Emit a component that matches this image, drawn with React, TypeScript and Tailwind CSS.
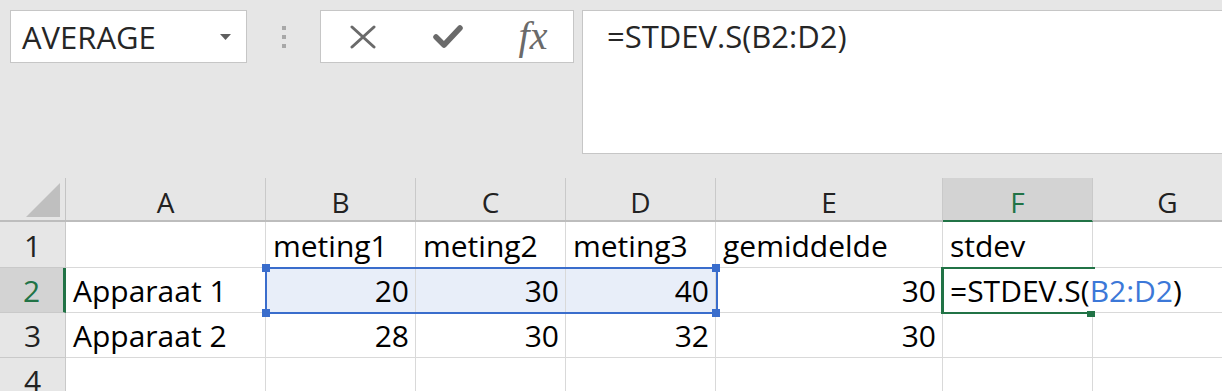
const cellFont = { fontFamily: "'Open Sans', 'Liberation Sans', sans-serif" };

type Col = { key: string; w: string };

const columns: Col[] = [
  { key: "A", w: "w-[200px]" },
  { key: "B", w: "w-[150px]" },
  { key: "C", w: "w-[150px]" },
  { key: "D", w: "w-[150px]" },
  { key: "E", w: "w-[227px]" },
  { key: "F", w: "w-[150px]" },
  { key: "G", w: "w-[150px]" },
];

// [text, align]
type Cell = [string, "l" | "r"];

const rows: { n: number; h: string; cells: Cell[] }[] = [
  {
    n: 1,
    h: "h-[46px]",
    cells: [
      ["", "l"],
      ["meting1", "l"],
      ["meting2", "l"],
      ["meting3", "l"],
      ["gemiddelde", "l"],
      ["stdev", "l"],
      ["", "l"],
    ],
  },
  {
    n: 2,
    h: "h-[45px]",
    cells: [
      ["Apparaat 1", "l"],
      ["20", "r"],
      ["30", "r"],
      ["40", "r"],
      ["30", "r"],
      ["", "l"],
      ["", "l"],
    ],
  },
  {
    n: 3,
    h: "h-[45px]",
    cells: [
      ["Apparaat 2", "l"],
      ["28", "r"],
      ["30", "r"],
      ["32", "r"],
      ["30", "r"],
      ["", "l"],
      ["", "l"],
    ],
  },
  {
    n: 4,
    h: "h-[45px]",
    cells: [
      ["", "l"],
      ["", "l"],
      ["", "l"],
      ["", "l"],
      ["", "l"],
      ["", "l"],
      ["", "l"],
    ],
  },
];

const CancelIcon = () => (
  <svg width="28" height="24" viewBox="0 0 28 24">
    <path d="M3 2 L25 22 M25 2 L3 22" stroke="#6a6a6a" strokeWidth="3" strokeLinecap="round" fill="none" />
  </svg>
);

const CheckIcon = () => (
  <svg width="32" height="26" viewBox="0 0 32 26">
    <path d="M4 13 L12 21 L28 4" stroke="#6a6a6a" strokeWidth="5.5" strokeLinecap="round" strokeLinejoin="round" fill="none" />
  </svg>
);

const App = () => {
  return (
    <div className="w-[1222px] h-[391px] overflow-hidden bg-[#e6e6e6] text-[#000]" style={cellFont}>
      {/* Formula bar */}
      <div className="h-[178px] flex items-start pt-[10px] pl-[10px]">
        <div className="w-[237px] h-[53px] shrink-0 bg-white border border-[#c6c6c6] flex items-center justify-between pl-[11px] pr-[15px]">
          <span className="text-[31px] leading-[40px] text-[#262626]">AVERAGE</span>
          <svg width="11" height="6" viewBox="0 0 11 6">
            <path d="M0 0 H11 L5.5 6 Z" fill="#5f5f5f" />
          </svg>
        </div>
        <div className="w-[73px] h-[53px] shrink-0 flex flex-col items-center justify-center gap-[5px] pl-[1px]">
          <div className="w-[4px] h-[4px] bg-[#a8a8a8]" />
          <div className="w-[4px] h-[4px] bg-[#a8a8a8]" />
          <div className="w-[4px] h-[4px] bg-[#a8a8a8]" />
        </div>
        <div className="w-[254px] h-[53px] shrink-0 bg-white border border-[#c6c6c6] flex items-center">
          <div className="w-[84px] flex justify-center">
            <CancelIcon />
          </div>
          <div className="w-[84px] flex justify-center pl-[2px]">
            <CheckIcon />
          </div>
          <div className="w-[84px] flex justify-center pl-[4px]">
            <span
              className="text-[40px] leading-[44px] italic text-[#6a6a6a] -mt-[2px]"
              style={{ fontFamily: "'Liberation Serif', serif" }}
            >
              fx
            </span>
          </div>
        </div>
        <div className="ml-[8px] w-[660px] h-[144px] shrink-0 bg-white border border-[#c6c6c6] pl-[24px] pt-[5px]">
          <span className="text-[31px] leading-[40px] text-[#262626]">=STDEV.S(B2:D2)</span>
        </div>
      </div>

      {/* Sheet grid */}
      <div className="relative">
        {/* Column headers */}
        <div className="flex h-[44px] border-b-2 border-[#bdbdbd]">
          <div className="w-[66px] shrink-0 border-r border-[#c4c4c4] flex items-end justify-end pr-[5px] pb-[3px]">
            <svg width="34" height="34" viewBox="0 0 34 34">
              <path d="M34 0 V34 H0 Z" fill="#bfbfbf" />
            </svg>
          </div>
          {columns.map((c) => (
            <div
              key={c.key}
              className={`${c.w} shrink-0 border-r border-[#c9c9c9] flex items-end justify-center pb-[4px] text-[28px] leading-[28px] ${
                c.key === "F" ? "bg-[#d3d3d3] text-[#217346] border-b-2 border-b-[#217346] -mb-[2px]" : "text-[#222]"
              }`}
            >
              {c.key}
            </div>
          ))}
        </div>

        {/* Rows */}
        {rows.map((r) => (
          <div key={r.n} className={`flex ${r.h}`}>
            <div
              className={`w-[66px] shrink-0 border-b border-[#c9c9c9] flex items-end justify-center pb-[6px] text-[30px] leading-[30px] ${
                r.n === 2
                  ? "bg-[#d3d3d3] text-[#217346] border-r-[3px] border-r-[#217346]"
                  : "border-r border-[#c4c4c4] text-[#222]"
              }`}
            >
              {r.n}
            </div>
            {r.cells.map(([text, align], i) => {
              const col = columns[i].key;
              const selected = r.n === 2 && (col === "B" || col === "C" || col === "D");
              const active = r.n === 2 && col === "F";
              return (
                <div
                  key={col}
                  className={`${columns[i].w} shrink-0 border-b border-[#d9d9d9] ${
                    active ? "" : "border-r"
                  } border-r-[#d9d9d9] flex items-end pb-[6px] text-[30px] leading-[30px] whitespace-nowrap ${
                    align === "r" ? "justify-end pr-[6px]" : "justify-start pl-[7px]"
                  } ${selected ? "bg-[#e8eef9]" : "bg-white"} ${active ? "relative z-10 overflow-visible" : "overflow-hidden"}`}
                >
                  {active ? (
                    <span>
                      =STDEV.S(<span className="text-[#3c78d8]">B2:D2</span>)
                    </span>
                  ) : (
                    text
                  )}
                </div>
              );
            })}
          </div>
        ))}

        {/* Range B2:D2 highlight */}
        <div className="absolute left-[265px] top-[89px] w-[453px] h-[47px] border-2 border-[#3a6dcc] pointer-events-none z-20" />
        <div className="absolute left-[262px] top-[86px] w-[8px] h-[8px] bg-[#3a6dcc] z-20" />
        <div className="absolute left-[262px] top-[131px] w-[8px] h-[8px] bg-[#3a6dcc] z-20" />
        <div className="absolute left-[712px] top-[86px] w-[8px] h-[8px] bg-[#3a6dcc] z-20" />
        <div className="absolute left-[712px] top-[131px] w-[8px] h-[8px] bg-[#3a6dcc] z-20" />

        {/* Active cell F2 */}
        <div className="absolute left-[941px] top-[89px] w-[154px] h-[47px] border-t-2 border-l-[3px] border-b-2 border-[#217346] pointer-events-none z-20" />
        <div className="absolute left-[1087px] top-[133px] w-[8px] h-[6px] bg-[#217346] z-20" />
      </div>
    </div>
  );
};

export default App;
